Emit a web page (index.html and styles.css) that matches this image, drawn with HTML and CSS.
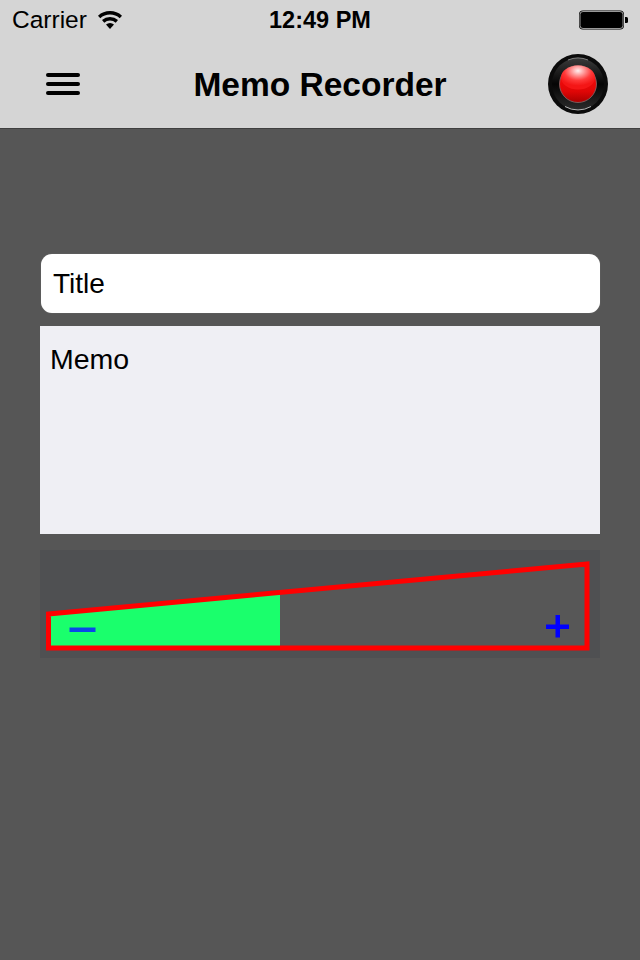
FILE: index.html
```html
<!DOCTYPE html>
<html lang="en">
<head>
  <meta charset="UTF-8">
  <meta name="viewport" content="width=device-width, initial-scale=1.0">
  <title>Memo Recorder</title>
  <link rel="stylesheet" href="styles.css">
</head>
<body>
  <header class="top">
    <div class="status">
      <div class="status-left">
        <span class="carrier">Carrier</span>
        <svg class="wifi" width="24" height="18" viewBox="0 0 24 18">
          <path d="M1.13 5.93 A16.25 16.25 0 0 1 22.87 5.93" fill="none" stroke="#000" stroke-width="3.4"/>
          <path d="M5.14 10.38 A10.25 10.25 0 0 1 18.86 10.38" fill="none" stroke="#000" stroke-width="3.4"/>
          <path d="M12 18 L7.99 13.54 A6 6 0 0 1 16.01 13.54 Z" fill="#000"/>
        </svg>
      </div>
      <span class="time">12:49 PM</span>
      <svg class="battery" width="50" height="20" viewBox="0 0 50 20">
        <rect x="1" y="1.5" width="43" height="17" rx="3" fill="#000" stroke="#000" stroke-width="2"/>
        <rect x="1" y="1.5" width="43" height="17" rx="3" fill="none" stroke="#fff" stroke-opacity="0.75" stroke-width="0.8"/>
        <path d="M46 7 h1.5 a1.5 1.5 0 0 1 1.5 1.5 v3 a1.5 1.5 0 0 1 -1.5 1.5 h-1.5 Z" fill="#000"/>
      </svg>
    </div>
    <nav class="nav">
      <div class="menu"><span></span><span></span><span></span></div>
      <h1 class="nav-title">Memo Recorder</h1>
      <svg class="record" width="60" height="60" viewBox="0 0 60 60">
        <defs>
          <linearGradient id="ledBody" x1="0" y1="0" x2="0" y2="1">
            <stop offset="0" stop-color="#ff1010"/>
            <stop offset="0.7" stop-color="#e00606"/>
            <stop offset="1" stop-color="#a80000"/>
          </linearGradient>
          <radialGradient id="ledShine" cx="50%" cy="22%" r="62%">
            <stop offset="0" stop-color="#fff0f0"/>
            <stop offset="0.3" stop-color="#ff9a9a"/>
            <stop offset="0.65" stop-color="#ff3a3a"/>
            <stop offset="1" stop-color="#f41616"/>
          </radialGradient>
          <linearGradient id="ringGrad" x1="0" y1="0" x2="0" y2="1">
            <stop offset="0" stop-color="#3a3a3a"/>
            <stop offset="0.5" stop-color="#050505"/>
            <stop offset="1" stop-color="#2c2c2c"/>
          </linearGradient>
        </defs>
        <circle cx="30" cy="30" r="30" fill="#0b0b0b"/>
        <circle cx="30" cy="30" r="26" fill="url(#ringGrad)"/>
        <path d="M20 6 A26 26 0 0 1 40 6" fill="none" stroke="#808080" stroke-width="1"/>
        <path d="M17 52.5 A26 26 0 0 0 43 52.5" fill="none" stroke="#b4b4b4" stroke-width="1"/>
        <circle cx="30" cy="30" r="18.5" fill="url(#ledBody)" stroke="#8a6a6a" stroke-width="0.8"/>
        <ellipse cx="30" cy="23.5" rx="17" ry="12" fill="url(#ledShine)"/>
      </svg>
    </nav>
  </header>

  <main class="content">
    <input class="title-field" type="text" value="Title">
    <textarea class="memo-field">Memo</textarea>
    <div class="level">
      <svg width="560" height="108" viewBox="0 0 560 108">
        <polygon points="8.5,64 547,14 547,98 8.5,98" fill="#575757"/>
        <polygon points="8.5,64.5 240,44 240,98 8.5,98" fill="#1aff6c"/>
        <g class="soft">
          <polygon points="8.5,64 547,14 547,98 8.5,98" fill="none" stroke="#ff0000" stroke-width="5"/>
          <rect x="29.5" y="77.5" width="26" height="4.5" fill="#0a48e8"/>
          <rect x="506" y="74.5" width="23" height="4.5" fill="#0000ff"/>
          <rect x="515.5" y="65" width="4.5" height="22.5" fill="#0000ff"/>
        </g>
      </svg>
    </div>
  </main>
</body>
</html>
```

FILE: styles.css
```css
* {
  box-sizing: border-box;
}
html, body {
  margin: 0;
  height: 100%;
}
body {
  background-color: #565656;
  font-family: "Liberation Sans", Arial, sans-serif;
  color: #000;
}
.top {
  height: 129px;
  background-color: #d5d5d5;
  border-bottom: 1px solid #3f3f3f;
}
.status {
  height: 40px;
  padding: 0 11px 0 12px;
  display: flex;
  align-items: center;
  justify-content: space-between;
  position: relative;
}
.status-left {
  display: flex;
  align-items: center;
  gap: 11px;
}
.carrier {
  font-size: 24.5px;
}
.time {
  position: absolute;
  left: 0;
  right: 0;
  text-align: center;
  font-size: 23.5px;
  font-weight: bold;
}
.nav {
  height: 88px;
  padding: 0 32px 0 46px;
  display: flex;
  align-items: center;
  justify-content: space-between;
  position: relative;
}
.menu {
  width: 34px;
  display: flex;
  flex-direction: column;
  gap: 5px;
}
.menu span {
  height: 4px;
  border-radius: 2px;
  background-color: #000;
}
.nav-title {
  position: absolute;
  left: 0;
  right: 0;
  margin: 2px 0 0;
  text-align: center;
  font-size: 33.5px;
  font-weight: bold;
}
.content {
  padding: 125px 40px 0;
  display: flex;
  flex-direction: column;
}
.title-field {
  height: 59px;
  margin-left: 1px;
  padding: 0 12px;
  border: none;
  border-radius: 11px;
  box-shadow: 0 0 1px #8a8a8a;
  background-color: #fff;
  font: 28px "Liberation Sans", Arial, sans-serif;
  color: #000;
  outline: none;
}
.memo-field {
  display: block;
  height: 208px;
  margin-top: 13px;
  padding: 16px 10px;
  border: none;
  border-radius: 0;
  background-color: #efeff4;
  font: 28.5px/34px "Liberation Sans", Arial, sans-serif;
  color: #000;
  resize: none;
  outline: none;
}
.level {
  height: 108px;
  margin-top: 16px;
  background-color: #4f5052;
}
.level svg {
  display: block;
}
.soft {
  filter: blur(0.4px);
}
```
